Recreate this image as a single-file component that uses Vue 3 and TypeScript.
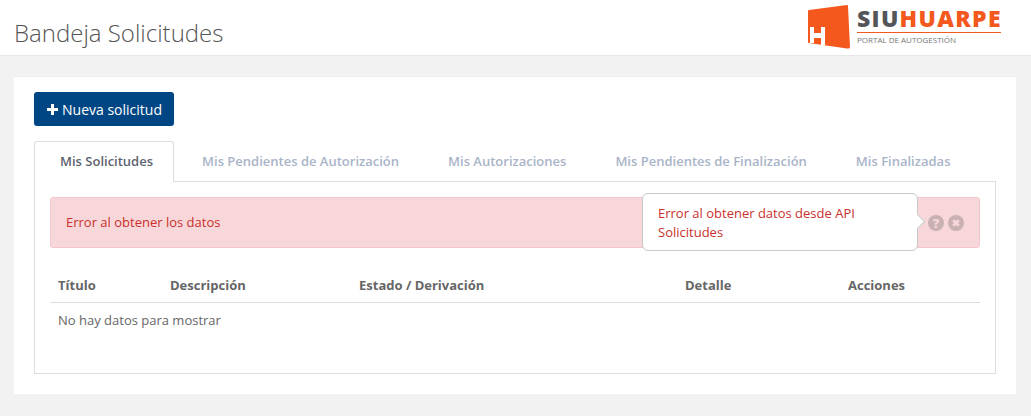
<script setup lang="ts">
interface Tab {
  label: string
  active?: boolean
}

const tabs: Tab[] = [
  { label: 'Mis Solicitudes', active: true },
  { label: 'Mis Pendientes de Autorización' },
  { label: 'Mis Autorizaciones' },
  { label: 'Mis Pendientes de Finalización' },
  { label: 'Mis Finalizadas' },
]

const columns = [
  { label: 'Título', width: '112px' },
  { label: 'Descripción', width: '189px' },
  { label: 'Estado / Derivación', width: '326px' },
  { label: 'Detalle', width: '163px' },
  { label: 'Acciones', width: '124px' },
]
</script>

<template>
  <div class="page">
    <header class="top">
      <h1>Bandeja Solicitudes</h1>
      <div class="logo">
        <svg class="logo-mark" width="42" height="44" viewBox="0 0 42 44">
          <path d="M0 6 Q0 5 1 5 L39 0 Q40 0 40 1 L42 42 Q42 44 39 43.5 L1 38 Q0 38 0 37 Z" fill="#f4581c" />
          <path d="M2 22 H6 V28 H13 V22 H17 V40 H13 V33 H6 V38 H2 Z" fill="#fff" />
        </svg>
        <div class="logo-text">
          <div class="logo-name"><span class="siu">SIU</span><span class="huarpe">HUARPE</span></div>
          <div class="logo-sub">PORTAL DE AUTOGESTIÓN</div>
        </div>
      </div>
    </header>

    <main class="card">
      <button class="btn-new"><span class="plus"></span>Nueva solicitud</button>

      <nav class="tabs">
        <div v-for="tab in tabs" :key="tab.label" class="tab" :class="{ active: tab.active }">
          {{ tab.label }}
        </div>
      </nav>

      <section class="panel">
        <div class="alert">
          <span class="alert-text">Error al obtener los datos</span>
          <div class="alert-icons">
            <svg width="16" height="16" viewBox="0 0 16 16">
              <circle cx="8" cy="8" r="8" fill="#c9b1b3" />
              <text x="8" y="12.5" text-anchor="middle" class="q">?</text>
            </svg>
            <svg width="16" height="16" viewBox="0 0 16 16">
              <circle cx="8" cy="8" r="8" fill="#c9b1b3" />
              <path d="M5.2 5.2 L10.8 10.8 M10.8 5.2 L5.2 10.8" stroke="#f8d7da" stroke-width="2.8" />
            </svg>
          </div>
          <div class="tooltip">Error al obtener datos desde API Solicitudes</div>
        </div>

        <div class="table-head">
          <div v-for="col in columns" :key="col.label" :style="{ width: col.width }">{{ col.label }}</div>
        </div>
        <div class="empty">No hay datos para mostrar</div>
      </section>
    </main>
  </div>
</template>

<style>
html,
body {
  margin: 0;
  background: #f2f2f2;
}
</style>

<style scoped>
.page {
  height: 416px;
  overflow: hidden;
  background: #f2f2f2;
  font-family: 'Open Sans', sans-serif;
  font-size: 13px;
}

.top {
  height: 55px;
  background: #fff;
  border-bottom: 1px solid #e7e7e7;
  display: flex;
  justify-content: space-between;
  padding-left: 14px;
}

h1 {
  margin: 16px 0 0;
  font-size: 24px;
  line-height: 33px;
  font-weight: 300;
  color: #555;
}

.logo {
  display: flex;
  margin: 5px 30px 0 0;
  gap: 7px;
}

.logo-text {
  width: 144px;
}

.logo-name {
  font-weight: 800;
  font-size: 23px;
  line-height: 24px;
  letter-spacing: 1.3px;
  border-bottom: 1px solid #f4581c;
  height: 26px;
  margin-top: 1px;
  white-space: nowrap;
}

.siu {
  color: #55565a;
}

.huarpe {
  color: #f4581c;
}

.logo-sub {
  font-size: 8px;
  line-height: 14px;
  color: #777;
}

.card {
  margin: 20px 15px 0 14px;
  height: 302px;
  background: #fff;
  border-top: 1px solid #eceef2;
  padding: 15px 20px 0;
}

.btn-new {
  display: flex;
  align-items: center;
  height: 34px;
  width: 140px;
  padding: 0 0 0 13px;
  border: none;
  border-radius: 3px;
  background: #004685;
  color: #fff;
  font: 14px 'Open Sans', sans-serif;
}

.plus {
  width: 11px;
  height: 11px;
  margin-right: 4px;
  background:
    linear-gradient(#fff, #fff) center / 100% 3px no-repeat,
    linear-gradient(#fff, #fff) center / 3px 100% no-repeat;
}

.tabs {
  display: flex;
  margin-top: 15px;
  height: 40px;
}

.tab {
  padding: 11px 24px 0 25px;
  font-weight: 600;
  line-height: 18px;
  color: #aab4c8;
  white-space: nowrap;
}

.tab.active {
  background: #fff;
  color: #5c6370;
  border: 1px solid #ddd;
  border-bottom: none;
  border-radius: 3px 3px 0 0;
  height: 41px;
  box-sizing: border-box;
  padding-top: 10px;
  padding-right: 20px;
  margin-right: 3px;
  position: relative;
  z-index: 1;
}

.panel {
  border: 1px solid #ddd;
  padding: 15px;
  box-sizing: border-box;
  height: 193px;
}

.alert {
  position: relative;
  height: 51px;
  box-sizing: border-box;
  background: #f8d7da;
  border: 1px solid #f5c6cb;
  border-radius: 3px;
  color: #c9302c;
  display: flex;
  align-items: center;
  justify-content: space-between;
  padding: 0 15px;
}

.alert-text {
  margin-top: -2px;
}

.alert-icons {
  display: flex;
  gap: 4px;
}

.q {
  font: 800 13px 'Open Sans', sans-serif;
  fill: #f8d7da;
}

.tooltip {
  position: absolute;
  left: 591px;
  top: -5px;
  width: 276px;
  height: 58px;
  box-sizing: border-box;
  padding: 10px 15px;
  background: #fff;
  border: 1px solid #c8c8c8;
  border-radius: 6px;
  line-height: 19px;
}

.tooltip::after {
  content: '';
  position: absolute;
  right: -6px;
  top: 22px;
  width: 10px;
  height: 10px;
  background: #fff;
  border-top: 1px solid #c8c8c8;
  border-right: 1px solid #c8c8c8;
  transform: rotate(45deg);
}

.table-head {
  display: flex;
  margin-top: 20px;
  height: 34px;
  border-bottom: 1px solid #ddd;
  font-weight: 700;
  color: #666;
  line-height: 34px;
  padding-left: 8px;
}

.empty {
  padding: 8px;
  line-height: 18px;
  color: #666;
}
</style>
